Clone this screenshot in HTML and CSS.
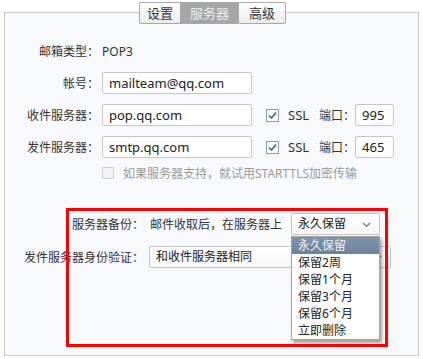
FILE: index.html
```html
<!DOCTYPE html>
<html lang="zh-CN">
<head>
  <meta charset="UTF-8">
  <title>服务器设置</title>
  <link rel="stylesheet" href="styles.css">
</head>
<body>

<div class="panel">
  <div class="tabs">
    <div class="tab">设置</div>
    <div class="tab tab-on">服务器</div>
    <div class="tab">高级</div>
  </div>

  <div class="form">
    <div class="row">
      <span class="label">邮箱类型：</span>
      <span class="value">POP3</span>
    </div>

    <div class="row">
      <span class="label">帐号：</span>
      <div class="input">mailteam@qq.com</div>
    </div>

    <div class="row">
      <span class="label">收件服务器：</span>
      <div class="input">pop.qq.com</div>
      <span class="check check-on ssl-check">
        <svg width="13" height="13" viewBox="0 0 13 13"><polyline points="3,6.5 5.5,9 10,3.5" fill="none" stroke="#2f66ad" stroke-width="1.6"/></svg>
      </span>
      <span class="ssl">SSL</span>
      <span class="port-label">端口：</span>
      <div class="input port">995</div>
    </div>

    <div class="row">
      <span class="label">发件服务器：</span>
      <div class="input">smtp.qq.com</div>
      <span class="check check-on ssl-check">
        <svg width="13" height="13" viewBox="0 0 13 13"><polyline points="3,6.5 5.5,9 10,3.5" fill="none" stroke="#2f66ad" stroke-width="1.6"/></svg>
      </span>
      <span class="ssl">SSL</span>
      <span class="port-label">端口：</span>
      <div class="input port">465</div>
    </div>

    <div class="row row-tls">
      <span class="check check-off"></span>
      <span class="muted">如果服务器支持，就试用STARTTLS加密传输</span>
    </div>

    <div class="row row-backup">
      <span class="label label-wide">服务器备份：</span>
      <span class="value">邮件收取后，在服务器上</span>
      <div class="select select-keep">
        <span>永久保留</span>
        <svg class="arrow" width="9" height="6" viewBox="0 0 9 6"><polyline points="1,1 4.5,4.5 8,1" fill="none" stroke="#777" stroke-width="1.2"/></svg>
        <ul class="menu">
          <li class="menu-on">永久保留</li>
          <li>保留2周</li>
          <li>保留1个月</li>
          <li>保留3个月</li>
          <li>保留6个月</li>
          <li>立即删除</li>
        </ul>
      </div>
    </div>

    <div class="row row-auth">
      <span class="label label-wide">发件服务器身份验证：</span>
      <div class="select select-auth">
        <span>和收件服务器相同</span>
        <svg class="arrow" width="9" height="6" viewBox="0 0 9 6"><polyline points="1,1 4.5,4.5 8,1" fill="none" stroke="#777" stroke-width="1.2"/></svg>
      </div>
    </div>
  </div>

  <div class="mark"></div>
</div>

</body>
</html>
```

FILE: styles.css
```css
html, body {
  margin: 0;
  padding: 0;
  background: #fff;
}
body {
  padding: 12px 4px 3px 4px;
  font-family: "Noto Sans", "Noto Sans CJK SC", sans-serif;
  font-size: 12px;
  color: #333;
}

.panel {
  position: relative;
  height: 342px;
  border: 1px solid #c8c8c8;
  background: #f7f9fc;
}

.tabs {
  display: flex;
  width: fit-content;
  margin: -11px auto 0 auto;
  position: relative;
  left: 1px;
}
.tab {
  height: 20px;
  line-height: 20px;
  padding: 0 8px;
  border: 1px solid #a9a9a9;
  border-right: none;
  background: linear-gradient(#ffffff, #ececec);
  color: #333;
  font-size: 13px;
}
.tab:first-child {
  border-radius: 2px 0 0 2px;
  padding: 0 7px;
}
.tab:last-child {
  border-right: 1px solid #a9a9a9;
  border-radius: 0 2px 2px 0;
  padding: 0 10px;
}
.tab-on {
  background: #a6a6a6;
  color: #ececec;
  padding: 0 9px;
}

.form {
  display: flex;
  flex-direction: column;
  gap: 10px;
  margin-top: 16px;
}
.row {
  display: flex;
  align-items: center;
  height: 22px;
}
.label {
  width: 94px;
  margin-right: 3px;
  text-align: right;
  white-space: nowrap;
}
.label-wide {
  width: 139px;
  margin-right: 5px;
}

.input {
  box-sizing: border-box;
  width: 150px;
  height: 22px;
  line-height: 20px;
  padding-left: 6px;
  border: 1px solid #c6c6c6;
  border-radius: 2px;
  background: #fff;
  color: #222;
  font-size: 13px;
}
.input.port {
  width: 39px;
  padding-left: 6px;
}

.check {
  box-sizing: border-box;
  display: inline-block;
  width: 13px;
  height: 13px;
  border: 1px solid #7c9fc9;
  background: #fff;
}
.check svg {
  display: block;
  margin: -1px;
}
.ssl-check {
  margin-left: 14px;
}
.ssl {
  margin-left: 9px;
  font-size: 13px;
}
.port-label {
  margin-left: 10px;
}

.row-tls {
  height: 20px;
  margin-top: -5px;
  padding-left: 97px;
}
.check-off {
  width: 12px;
  height: 12px;
  border-color: #cfcfcf;
  background: #f4f4f4;
}
.muted {
  margin-left: 9px;
  color: #999;
}

.row-backup {
  margin-top: 20px;
}
.row-backup .value {
  margin-left: 1px;
}
.row-auth {
  margin-top: 1px;
}

.select {
  position: relative;
  box-sizing: border-box;
  height: 22px;
  line-height: 20px;
  padding-left: 6px;
  border: 1px solid #c4c4c4;
  border-radius: 2px;
  background: linear-gradient(#ffffff, #f6f6f6);
  color: #222;
}
.select-keep {
  width: 89px;
  margin-left: 9px;
}
.select-auth {
  width: 242px;
}
.arrow {
  position: absolute;
  right: 8px;
  top: 8px;
}

.menu {
  position: absolute;
  top: 22px;
  left: -1px;
  width: 89px;
  box-sizing: border-box;
  margin: 0;
  padding: 0;
  list-style: none;
  border: 1px solid #a3a3a3;
  background: #fff;
  box-shadow: 2px 3px 3px rgba(0, 0, 0, 0.35);
  z-index: 2;
}
.menu li {
  height: 17px;
  line-height: 17px;
  padding-left: 6px;
  color: #222;
}
.menu .menu-on {
  background: linear-gradient(#7f95ae, #6a819c);
  color: #f2f2f2;
}

/* red annotation frame over the screenshot */
.mark {
  position: absolute;
  left: 61px;
  top: 195px;
  width: 322px;
  height: 139px;
  box-sizing: border-box;
  border: 3px solid #ff0000;
  z-index: 3;
  pointer-events: none;
}
```
